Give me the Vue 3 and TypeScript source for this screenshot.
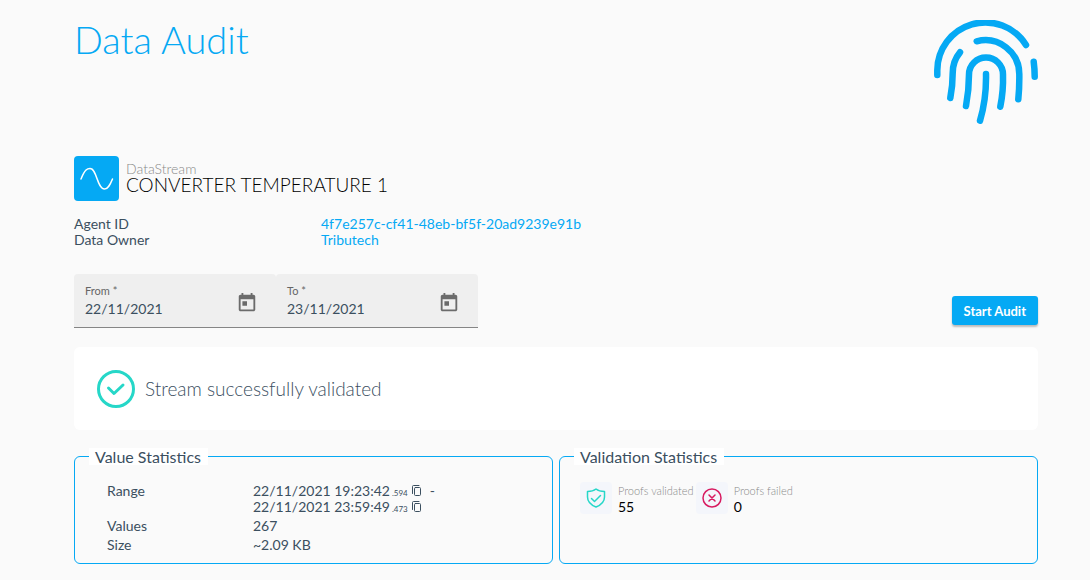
<script setup lang="ts">
import { ref } from 'vue'

interface DateField {
  id: string
  label: string
  value: string
}

interface Stamp {
  time: string
  ms: string
}

const dates = ref<DateField[]>([
  { id: 'from', label: 'From', value: '22/11/2021' },
  { id: 'to', label: 'To', value: '23/11/2021' },
])

const range: Stamp[] = [
  { time: '22/11/2021 19:23:42', ms: '.594' },
  { time: '22/11/2021 23:59:49', ms: '.473' },
]
</script>

<template>
  <main class="page">
    <header class="head">
      <h1>Data Audit</h1>
      <svg class="fingerprint" viewBox="0 0 104 104" aria-hidden="true">
        <path d="M3.3 55V51A48 48 0 0 1 92 25" />
        <path d="M99.7 41.7Q100.7 49 100.7 56.7" />
        <path d="M42.7 21.3A34 34 0 0 1 85.3 54Q85.5 67 84.3 79.3" />
        <path d="M26 32.3Q18.7 41 18.7 53Q18.7 66 16.3 78" />
        <path d="M32 86Q35 70 35 54.5A17 17 0 0 1 69 54.5Q69.5 71 66.3 86.7" />
        <path d="M52 54Q52.5 79 46 100.7" />
      </svg>
    </header>

    <section class="stream">
      <div class="stream-icon">
        <svg viewBox="0 0 45 45" aria-hidden="true">
          <path d="M7 23C11 13 13.500 12.500 16 12.500C23 12.500 23 33 30.500 33C34 33 36 29 38.500 23" />
        </svg>
      </div>
      <div>
        <p class="kind">DataStream</p>
        <h2>CONVERTER TEMPERATURE 1</h2>
      </div>
    </section>

    <dl class="meta">
      <dt>Agent ID</dt>
      <dd><a href="#agent">4f7e257c-cf41-48eb-bf5f-20ad9239e91b</a></dd>
      <dt>Data Owner</dt>
      <dd><a href="#owner">Tributech</a></dd>
    </dl>

    <form class="controls" @submit.prevent>
      <div class="dates">
        <div v-for="d in dates" :key="d.id" class="field">
          <div class="entry">
            <label :for="d.id">{{ d.label }} *</label>
            <input :id="d.id" v-model="d.value" type="text" required />
          </div>
          <button type="button" class="picker" :aria-label="`Open calendar: ${d.label}`">
            <svg viewBox="0 0 24 24" aria-hidden="true">
              <path d="M19 3h-1V1h-2v2H8V1H6v2H5c-1.110 0-1.990.9-1.990 2L3 19c0 1.100.89 2 2 2h14c1.100 0 2-.9 2-2V5c0-1.100-.9-2-2-2zm0 16H5V8h14v11zM7 10h5v5H7z" />
            </svg>
          </button>
        </div>
      </div>
      <button type="submit" class="start">Start Audit</button>
    </form>

    <section class="result" role="status">
      <svg viewBox="0 0 38 38" aria-hidden="true">
        <circle cx="19" cy="19" r="17.500" />
        <path d="M11.500 18L17 23.500L26 15" />
      </svg>
      <span>Stream successfully validated</span>
    </section>

    <div class="stats">
      <fieldset>
        <legend>Value Statistics</legend>
        <dl class="values">
          <dt>Range</dt>
          <dd>
            <div v-for="(s, i) in range" :key="s.ms" class="stamp">
              <span>{{ s.time }}</span>
              <small>{{ s.ms }}</small>
              <button type="button" class="copy" :aria-label="`Copy ${s.time}`">
                <svg viewBox="0 0 10 12" aria-hidden="true">
                  <path d="M0.500 8.500V1.500Q0.500 0.500 1.500 0.500H7" />
                  <rect x="2.500" y="2.500" width="6" height="8" rx="1" />
                </svg>
              </button>
              <span v-if="i === 0" class="dash">-</span>
            </div>
          </dd>
          <dt>Values</dt>
          <dd>267</dd>
          <dt>Size</dt>
          <dd>~2.09 KB</dd>
        </dl>
      </fieldset>

      <fieldset>
        <legend>Validation Statistics</legend>
        <div class="proofs">
          <div class="proof">
            <div class="badge ok">
              <svg viewBox="0 0 20 20" aria-hidden="true">
                <path d="M10 1C7.500 3 4.500 3.500 1.500 3.500V9C1.500 14 5 17 10 19C15 17 18.500 14 18.500 9V3.500C15.500 3.500 12.500 3 10 1Z" />
                <path d="M5.500 10.500L8.500 13.500L14.500 7.500" />
              </svg>
            </div>
            <div>
              <p class="caption">Proofs validated</p>
              <p class="count">55</p>
            </div>
          </div>
          <div class="proof">
            <div class="badge bad">
              <svg viewBox="0 0 20 20" aria-hidden="true">
                <circle cx="10" cy="10" r="9" />
                <path d="M7 7L13 13M13 7L7 13" />
              </svg>
            </div>
            <div>
              <p class="caption">Proofs failed</p>
              <p class="count">0</p>
            </div>
          </div>
        </div>
      </fieldset>
    </div>
  </main>
</template>

<style>
body {
  background: #fafafa;
}
</style>

<style scoped>
.page {
  padding: 20px 52px 16px 74px;
  font-family: Lato, "Liberation Sans", sans-serif;
  font-size: 14px;
  line-height: 16px;
  color: #3b4f5f;
}
h1, h2, p, dl, dd {
  margin: 0;
}
button, input {
  font: inherit;
  border: 0;
  padding: 0;
}
button {
  cursor: pointer;
}
svg {
  display: block;
  fill: none;
  stroke-linecap: round;
  stroke-linejoin: round;
}
.head {
  display: flex;
  justify-content: space-between;
  align-items: flex-start;
}
h1 {
  font-size: 38px;
  line-height: 38px;
  font-weight: 300;
  color: #05a9f4;
}
.fingerprint {
  width: 104px;
  height: 104px;
  stroke: #05a9f4;
  stroke-width: 6.500;
}
.stream {
  display: flex;
  gap: 7px;
  margin-top: 32px;
}
.stream-icon {
  width: 45px;
  height: 45px;
  border-radius: 4px;
  background: #05a9f4;
}
.stream-icon svg {
  stroke: #fff;
  stroke-width: 1.500;
}
.kind {
  margin-top: 5px;
  font-weight: 300;
  color: #8a8a8a;
}
h2 {
  font-size: 19px;
  line-height: 16px;
  font-weight: 300;
  color: #000;
}
.meta {
  display: grid;
  grid-template-columns: 247px 1fr;
  margin-top: 15px;
}
a {
  color: #05a9f4;
  text-decoration: none;
}
.controls {
  display: flex;
  justify-content: space-between;
  align-items: flex-end;
  margin-top: 26px;
}
.dates {
  display: flex;
  border-bottom: 1px solid #858585;
}
.field {
  display: flex;
  align-items: center;
  justify-content: space-between;
  width: 202px;
  height: 53px;
  box-sizing: border-box;
  padding: 0 18px 0 11px;
  background: #efefef;
  border-radius: 4px 4px 0 0;
}
.entry {
  display: flex;
  flex-direction: column;
  width: 120px;
}
label {
  font-size: 11px;
  line-height: 16px;
  color: #666;
}
input {
  width: 100%;
  height: 20px;
  background: none;
  color: inherit;
  outline: none;
}
.picker {
  background: none;
  margin-top: 4px;
}
.picker svg {
  width: 22px;
  height: 22px;
  fill: #6b6b6b;
}
.start {
  height: 29px;
  margin-bottom: 3px;
  padding: 0 12px;
  border-radius: 3px;
  background: #05a9f4;
  color: #fff;
  font-size: 13px;
  font-weight: 700;
  box-shadow: 0 2px 2px rgba(0, 0, 0, 0.25);
}
.result {
  display: flex;
  align-items: center;
  gap: 10px;
  min-height: 83px;
  margin-top: 19px;
  padding: 0 23px;
  border-radius: 6px;
  background: #fff;
  font-size: 19px;
  line-height: 24px;
  font-weight: 300;
}
.result svg {
  width: 38px;
  height: 38px;
  stroke: #26d7c8;
  stroke-width: 3;
}
.stats {
  display: grid;
  grid-template-columns: 1fr 1fr;
  gap: 6px;
  margin-top: 18px;
}
fieldset {
  min-width: 0;
  margin: 0;
  padding: 0 20px 10px 20px;
  border: 1px solid #05a9f4;
  border-radius: 6px;
}
legend {
  margin-left: -6px;
  padding: 0 7px 0 6px;
  background: #fff;
  font-size: 16px;
  line-height: 17px;
}
.values {
  display: grid;
  grid-template-columns: 146px 1fr;
  row-gap: 3px;
  margin: 18px 0 0 12px;
}
.stamp {
  display: flex;
  align-items: center;
}
small {
  font-size: 8px;
  line-height: 12px;
  margin: 3px 4px 0 2px;
}
.copy {
  background: none;
  margin-bottom: 1px;
}
.copy svg {
  width: 10px;
  height: 12px;
  stroke: #3b4f5f;
}
.dash {
  margin-left: 8px;
}
.proofs {
  display: flex;
  gap: 2px;
  margin-top: 17px;
}
.proof {
  display: flex;
  gap: 6px;
}
.badge {
  display: grid;
  place-items: center;
  width: 32px;
  height: 32px;
  border-radius: 4px;
  background: #f4f6fb;
}
.badge svg {
  width: 20px;
  height: 20px;
  stroke-width: 1.500;
}
.ok {
  stroke: #26d7c8;
}
.bad {
  stroke: #d81b60;
}
.caption {
  margin-top: 1px;
  font-size: 11px;
  font-weight: 300;
  color: #8a8a8a;
}
.count {
  color: #000;
}
</style>
